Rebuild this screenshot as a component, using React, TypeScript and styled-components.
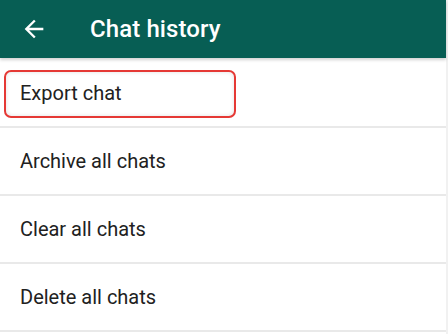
import styled, { createGlobalStyle } from 'styled-components'

const GlobalStyle = createGlobalStyle`
  html, body {
    margin: 0;
    padding: 0;
    background: #f1f1f1;
  }
  body {
    font-family: Roboto, "Noto Sans", "Liberation Sans", sans-serif;
  }
`

const Screen = styled.div`
  width: 446px;
  min-height: 334px;
  background: #ffffff;
  display: flex;
  flex-direction: column;
`

const Toolbar = styled.header`
  height: 58px;
  background: #075e54;
  display: flex;
  align-items: center;
  box-shadow: 0 2px 3px rgba(0, 0, 0, 0.18);
  position: relative;
  z-index: 1;
`

const BackButton = styled.button`
  width: 70px;
  height: 58px;
  padding: 0 0 0 20px;
  border: none;
  background: transparent;
  display: flex;
  align-items: center;
  color: #ffffff;
  cursor: pointer;
`

const Title = styled.h1`
  margin: 0 0 0 20px;
  color: #ffffff;
  font-size: 24px;
  font-weight: 500;
  letter-spacing: 0.1px;
`

const Menu = styled.ul`
  list-style: none;
  margin: 0;
  padding: 2px 0 0;
`

const Item = styled.li`
  position: relative;
  height: 66px;
  border-bottom: 2px solid #e9e9e9;
  display: flex;
  align-items: center;
  padding: 0 20px;
  font-size: 20px;
  color: #212121;
`

const ItemLabel = styled.span<{ $shift?: number }>`
  position: relative;
  z-index: 1;
  transform: translateY(${p => p.$shift ?? 0}px);
`

// red highlight drawn over the first entry
const Highlight = styled.div`
  position: absolute;
  left: 4px;
  top: 10px;
  width: 228px;
  height: 44px;
  border: 2px solid #e53935;
  border-radius: 7px;
  box-shadow: inset 0 0 4px rgba(0, 0, 0, 0.12);
`

const items = ['Export chat', 'Archive all chats', 'Clear all chats', 'Delete all chats']

export default function App() {
  return (
    <>
      <GlobalStyle />
      <Screen>
        <Toolbar>
          <BackButton aria-label="Back">
            <svg width="28" height="28" viewBox="0 0 24 24" fill="currentColor">
              <path d="M20 11H7.83l5.59-5.59L12 4l-8 8 8 8 1.41-1.41L7.83 13H20v-2z" />
            </svg>
          </BackButton>
          <Title>Chat history</Title>
        </Toolbar>
        <Menu>
          {items.map((label, i) => (
            <Item key={label}>
              {i === 0 && <Highlight />}
              <ItemLabel $shift={i === 0 ? 0 : 0}>{label}</ItemLabel>
            </Item>
          ))}
        </Menu>
      </Screen>
    </>
  )
}
